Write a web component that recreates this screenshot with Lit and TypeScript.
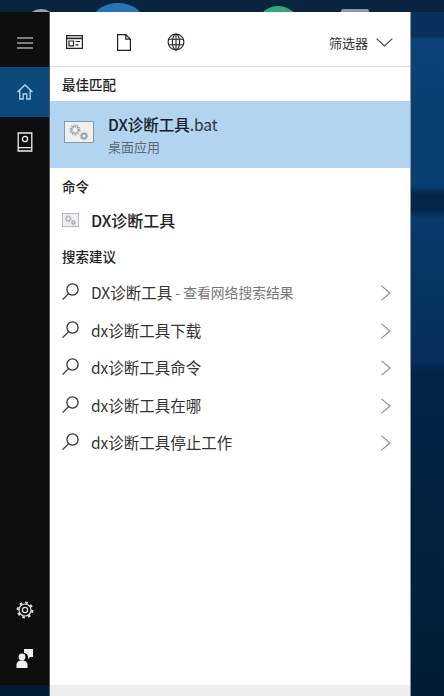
import { LitElement, html, css, svg } from "lit";
import { customElement } from "lit/decorators.js";

const search = svg`<svg class="mag" width="20" height="20" viewBox="0 0 20 20" fill="none" stroke="#333" stroke-width="1.3"><circle cx="11.5" cy="7.5" r="5.6"/><path d="M7.6 11.6 1.6 17.6"/></svg>`;
const chev = svg`<svg class="chev" width="12" height="16" viewBox="0 0 12 16" fill="none" stroke="#8a8a8a" stroke-width="1.1"><path d="M1.5 .8 10 8 1.5 15.2"/></svg>`;

const gears = (w: number, h: number) => svg`<svg width="${w}" height="${h}" viewBox="0 0 30 22" preserveAspectRatio="none"><rect x=".5" y=".5" width="29" height="21" fill="#eef0f1" stroke="#8f979d"/><g fill="none" stroke="#9aa1a6"><circle cx="11" cy="9" r="3.6" stroke-width="2.4" stroke-dasharray="1.6 .7"/><circle cx="11" cy="9" r="5.2" stroke-width="1" stroke-dasharray="1.6 1.6"/><circle cx="20" cy="15" r="2.4" stroke-width="1.8"/><circle cx="20" cy="15" r="3.8" stroke-width="1" stroke-dasharray="1.4 1.4"/></g></svg>`;

const suggestions = [
  ["DX诊断工具", " - 查看网络搜索结果"],
  ["dx诊断工具下载", ""],
  ["dx诊断工具命令", ""],
  ["dx诊断工具在哪", ""],
  ["dx诊断工具停止工作", ""],
];

@customElement("app-root")
export class AppRoot extends LitElement {
  static styles = css`
    :host {
      display: block; width: 444px; height: 696px; position: relative; overflow: hidden;
      font-family: "Noto Sans CJK SC", "Noto Sans", sans-serif;
      background: linear-gradient(180deg,
        #07315c 0, #07315c 36px, #0b4378 40px, #0a3f74 100px, #0a3f74 186px,
        #04264b 194px, #04264b 210px, #083a6d 218px, #06345f 300px,
        #052e59 362px, #03244a 372px, #032342 480px, #021c36 100%);
    }
    .top { position: absolute; left: 0; right: 0; top: 0; height: 12px; background: #08243f; overflow: hidden; }
    .blob { position: absolute; border-radius: 50%; }
    .b1 { left: 28px; top: 9px; width: 26px; height: 20px; background: #9aa5ad; }
    .b2 { left: 94px; top: 3px; width: 48px; height: 30px; background: #2a73b8; }
    .b3 { left: 259px; top: 6px; width: 38px; height: 30px; background: #35a77a; }
    .b4 { left: 341px; top: 9px; width: 28px; height: 20px; border-radius: 2px; background: #8b98a6; }
    .shell { display: flex; position: absolute; left: 0; top: 12px; width: 411px; height: 684px; }
    .side { width: 49px; height: 673px; background: #0e0e0e; display: flex; flex-direction: column; flex: none; }
    .sb { height: 42px; display: flex; align-items: center; justify-content: center; }
    .ham { height: 55px; padding-top: 6px; box-sizing: border-box; }
    .home { height: 50px; background: #0c4a7e; }
    .note { height: 50px; }
    .spacer { flex: 1; }
    .gear { height: 42px; }
    .person { height: 54px; }
    .panel { flex: 1; height: 684px; background: #fff; display: flex; flex-direction: column; border-left: 1px solid #555; border-right: 1px solid #8d969e; box-sizing: border-box; }
    .bar { height: 55px; flex: none; border-bottom: 1px solid #dedede; box-sizing: border-box; display: flex; align-items: center; padding: 6px 17px 0 16px; }
    .bar svg { flex: none; }
    .bi1 { margin-right: 34px; }
    .bi2 { margin-right: 36px; }
    .filter { margin-left: auto; font-size: 13px; color: #333; display: flex; align-items: center; gap: 8px; }
    .label { font-size: 13.5px; font-weight: 500; color: #222; padding-left: 12px; line-height: 18px; }
    .l1 { margin-top: 8px; height: 26px; }
    .best { height: 67px; flex: none; background: #b3d4ee; display: flex; align-items: center; padding-left: 14px; gap: 14px; }
    .best svg { margin-bottom: 6px; }
    .best .t { font-size: 15.5px; font-weight: 500; color: #14202c; line-height: 20px; }
    .best .t span { font-weight: 400; color: #24333f; }
    .best .s { font-size: 13px; color: #5a6a78; line-height: 18px; margin-top: 4px; }
    .l2 { margin-top: 9px; height: 16px; }
    .cmd { height: 40px; display: flex; align-items: center; padding-left: 12px; gap: 12px; font-size: 16px; font-weight: 500; color: #222; margin-top: 7px; }
    .l3 { margin-top: 7px; height: 18px; }
    .rows { margin-top: 8.5px; }
    .row { height: 37.5px; display: flex; align-items: center; padding: 0 18px 0 11px; font-size: 15.5px; color: #333; }
    .mag { flex: none; margin-right: 10px; }
    .hint { font-size: 13.8px; color: #777; white-space: pre; }
    .chev { margin-left: auto; margin-top: 2px; flex: none; }
    .foot { margin-top: auto; height: 11px; background: #eeeeee; flex: none; }
  `;

  render() {
    return html`
      <div class="top">
        <div class="blob b1"></div><div class="blob b2"></div><div class="blob b3"></div><div class="blob b4"></div>
      </div>
      <div class="shell">
        <nav class="side">
          <div class="sb ham">
            <svg width="18" height="12" viewBox="0 0 18 12" stroke="#eee" stroke-width="1.2"><path d="M1 1h16M1 6h16M1 11h16"/></svg>
          </div>
          <div class="sb home">
            <svg width="18" height="18" viewBox="0 0 18 18" fill="none" stroke="#bcd7ec" stroke-width="1.3"><path d="M1.5 9 9 2l7.5 7M3.8 7.500V16h3.400v-5h3.600v5h3.400V7.500"/></svg>
          </div>
          <div class="sb note">
            <svg width="16" height="20" viewBox="0 0 16 20" fill="none" stroke="#eee" stroke-width="1.3"><path d="M1.200 1h13.600v18H1.200zM1.200 15.600h13.600"/><circle cx="8" cy="7" r="2.600"/></svg>
          </div>
          <div class="spacer"></div>
          <div class="sb gear">
            <svg width="18" height="18" viewBox="0 0 18 18" fill="none" stroke="#e4e4e4"><circle cx="9" cy="9" r="2.600" stroke-width="1.200"/><circle cx="9" cy="9" r="6" stroke-width="1.200"/><circle cx="9" cy="9" r="7.400" stroke-width="2" stroke-dasharray="2.700 3.100"/></svg>
          </div>
          <div class="sb person">
            <svg width="18" height="20" viewBox="0 0 18 20" fill="#f2f2f2"><path d="M8 1h9v8h-3l-2 2V8.500A4.600 4.600 0 0 0 8 5z"/><circle cx="6" cy="9" r="3.400"/><path d="M.5 20v-3c0-3 2.400-4.400 5.500-4.400s5.500 1.400 5.500 4.400v3z"/></svg>
          </div>
        </nav>
        <main class="panel">
          <div class="bar">
            <svg class="bi1" width="17" height="14" viewBox="0 0 17 14" fill="none" stroke="#222" stroke-width="1.2"><path d="M.6.6h15.800v12.800H.6z"/><path d="M.6 3.400h15.800" stroke-width="1.600"/><path d="M3 6h4.500v4.800H3zM9.500 6.500h4.500M9.500 9.800h3"/></svg>
            <svg class="bi2" width="14" height="17" viewBox="0 0 14 17" fill="none" stroke="#222" stroke-width="1.200"><path d="M.6.6h8.200l4.600 4.600v11.200H.6zM8.800.6v4.600h4.600"/></svg>
            <svg width="18" height="18" viewBox="0 0 18 18" fill="none" stroke="#222" stroke-width="1.100"><circle cx="9" cy="9" r="7.900"/><ellipse cx="9" cy="9" rx="3.600" ry="7.900"/><path d="M1.500 6.300h15M1.500 11.700h15M9 1v16"/></svg>
            <div class="filter">筛选器
              <svg width="17" height="9" viewBox="0 0 17 9" fill="none" stroke="#444" stroke-width="1.100"><path d="M.6.6 8.500 8 16.400.6"/></svg>
            </div>
          </div>
          <div class="label l1">最佳匹配</div>
          <div class="best">
            ${gears(30, 22)}
            <div>
              <div class="t">DX诊断工具<span>.bat</span></div>
              <div class="s">桌面应用</div>
            </div>
          </div>
          <div class="label l2">命令</div>
          <div class="cmd">${gears(17, 14)}<span>DX诊断工具</span></div>
          <div class="label l3">搜索建议</div>
          <div class="rows">
            ${suggestions.map(([a, b]) => html`<div class="row">${search}<span>${a}</span>${b ? html`<span class="hint">${b}</span>` : ""}${chev}</div>`)}
          </div>
          <div class="foot"></div>
        </main>
      </div>
    `;
  }
}
